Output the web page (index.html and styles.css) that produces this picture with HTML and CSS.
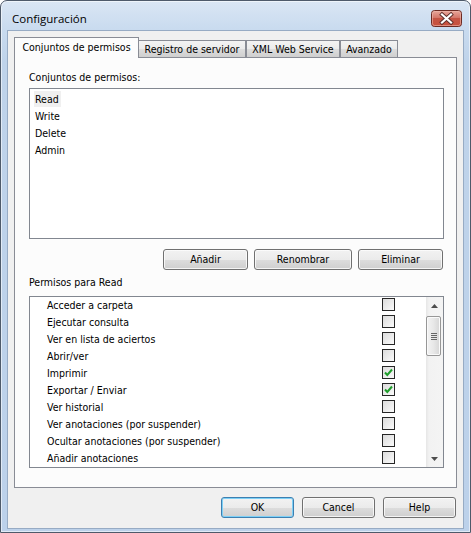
FILE: index.html
```html
<!DOCTYPE html>
<html lang="es">
<head>
<meta charset="utf-8">
<title>Configuración</title>
<link rel="stylesheet" href="styles.css">
</head>
<body>
<div class="window">
  <div class="titlebar">
    <span class="title">Configuración</span>
    <div class="close">
      <svg width="31" height="17" viewBox="0 0 31 17">
        <defs>
          <linearGradient id="cg" x1="0" y1="0" x2="0" y2="1">
            <stop offset="0" stop-color="#e9a99d"/>
            <stop offset="0.45" stop-color="#d4776a"/>
            <stop offset="0.5" stop-color="#c45444"/>
            <stop offset="1" stop-color="#c9513d"/>
          </linearGradient>
        </defs>
        <rect x="0.5" y="0.5" width="30" height="16" rx="3" ry="3" fill="url(#cg)" stroke="#6b2b24"/>
        <rect x="1.5" y="1.5" width="28" height="14" rx="2" ry="2" fill="none" stroke="#efb9ae" stroke-opacity="0.6"/>
        <path d="M11 4.5 L20 12.5 M20 4.5 L11 12.5" stroke="#5a2e2a" stroke-width="4" stroke-linecap="square"/>
        <path d="M11 4.5 L20 12.5 M20 4.5 L11 12.5" stroke="#ffffff" stroke-width="2.2" stroke-linecap="square"/>
      </svg>
    </div>
  </div>
  <div class="client">
    <div class="tabs">
      <div class="tab active">Conjuntos de permisos</div>
      <div class="tab t2">Registro de servidor</div>
      <div class="tab t3">XML Web Service</div>
      <div class="tab t4">Avanzado</div>
    </div>
    <div class="panel">
      <div class="label lbl1">Conjuntos de permisos:</div>
      <div class="listbox sets">
        <div class="item sel">Read</div>
        <div class="item">Write</div>
        <div class="item">Delete</div>
        <div class="item">Admin</div>
      </div>
      <div class="btnrow">
        <button class="btn b85">Añadir</button>
        <button class="btn b98">Renombrar</button>
        <button class="btn b85">Eliminar</button>
      </div>
      <div class="label lbl2">Permisos para Read</div>
      <div class="listbox perms">
        <div class="rows">
          <div class="prow"><span class="ptext">Acceder a carpeta</span><span class="cb"></span></div>
          <div class="prow"><span class="ptext">Ejecutar consulta</span><span class="cb"></span></div>
          <div class="prow"><span class="ptext">Ver en lista de aciertos</span><span class="cb"></span></div>
          <div class="prow"><span class="ptext">Abrir/ver</span><span class="cb"></span></div>
          <div class="prow"><span class="ptext">Imprimir</span><span class="cb checked"><svg width="11" height="11" viewBox="0 0 11 11"><path d="M2 5.5 L4.3 8 L9 2.5" fill="none" stroke="#1f9e2b" stroke-width="2"/></svg></span></div>
          <div class="prow"><span class="ptext">Exportar / Enviar</span><span class="cb checked"><svg width="11" height="11" viewBox="0 0 11 11"><path d="M2 5.5 L4.3 8 L9 2.5" fill="none" stroke="#1f9e2b" stroke-width="2"/></svg></span></div>
          <div class="prow"><span class="ptext">Ver historial</span><span class="cb"></span></div>
          <div class="prow"><span class="ptext">Ver anotaciones (por suspender)</span><span class="cb"></span></div>
          <div class="prow"><span class="ptext">Ocultar anotaciones (por suspender)</span><span class="cb"></span></div>
          <div class="prow"><span class="ptext">Añadir anotaciones</span><span class="cb"></span></div>
        </div>
        <div class="scrollbar">
          <div class="arrow up"><svg width="7" height="4" viewBox="0 0 7 4"><path d="M0 4 L3.5 0 L7 4 Z" fill="#4d4d4d"/></svg></div>
          <div class="track">
            <div class="thumb">
              <span class="grip"></span><span class="grip"></span><span class="grip"></span><span class="grip"></span>
            </div>
          </div>
          <div class="arrow down"><svg width="7" height="4" viewBox="0 0 7 4"><path d="M0 0 L7 0 L3.5 4 Z" fill="#4d4d4d"/></svg></div>
        </div>
      </div>
    </div>
    <div class="footer">
      <button class="btn b73 default">OK</button>
      <button class="btn b73">Cancel</button>
      <button class="btn b73">Help</button>
    </div>
  </div>
</div>
</body>
</html>
```
FILE: styles.css
```css
html, body {
  margin: 0;
  padding: 0;
  background: #ffffff;
}

body {
  width: 471px;
  height: 533px;
  overflow: hidden;
  font-family: "DejaVu Sans Condensed", "DejaVu Sans", sans-serif;
  font-stretch: condensed;
  font-size: 10.5px;
  color: #000;
}

.window {
  box-sizing: border-box;
  width: 471px;
  height: 533px;
  border: 1px solid #4e5a6a;
  border-radius: 7px 7px 0 0;
  background: linear-gradient(to bottom, #dae6f4 0px, #c9dbef 28px, #bfd3ea 60px, #bcd1ea 100%);
  display: flex;
  flex-direction: column;
  box-shadow: inset 0 0 0 1px rgba(255,255,255,0.55);
}

.titlebar {
  height: 29px;
  display: flex;
  align-items: flex-start;
  padding-left: 11px;
  flex-shrink: 0;
}

.title {
  font-family: "Open Sans", "Noto Sans", sans-serif;
  font-stretch: normal;
  font-size: 11.5px;
  line-height: 16px;
  margin-top: 10px;
  color: #000;
}

.close {
  margin-left: auto;
  margin-top: 9px;
  margin-right: 8px;
  width: 31px;
  height: 17px;
}

.close svg {
  display: block;
}

.client {
  flex: 1;
  margin: 0 6px 3px 6px;
  border: 1px solid #97abc4;
  background: #f0f0f0;
  padding: 6px 6px 0 6px;
  display: flex;
  flex-direction: column;
}

.tabs {
  height: 20px;
  display: flex;
  align-items: flex-end;
  flex-shrink: 0;
}

.tab {
  box-sizing: border-box;
  height: 17px;
  border: 1px solid #898c95;
  border-bottom: none;
  background: linear-gradient(to bottom, #f3f3f3 0%, #ebebeb 50%, #dddddd 51%, #cfcfcf 100%);
  display: flex;
  align-items: center;
  justify-content: center;
  white-space: nowrap;
  line-height: 14px;
}

.tab.active {
  width: 125px;
  height: 21px;
  margin-bottom: -1px;
  background: #fcfcfc;
  position: relative;
  z-index: 2;
  padding-bottom: 2px;
}

.tab.t2 {
  width: 108px;
  margin-left: -1px;
}

.tab.t3 {
  width: 94px;
}

.tab.t4 {
  width: 58px;
}

.panel {
  box-sizing: border-box;
  height: 431px;
  border: 1px solid #898c95;
  background: #fcfcfc;
  padding: 0 12px 0 14px;
  display: flex;
  flex-direction: column;
  flex-shrink: 0;
}

.label {
  line-height: 14px;
  height: 14px;
  white-space: nowrap;
}

.lbl1 {
  margin-top: 12px;
}

.lbl2 {
  margin-top: 5px;
}

.listbox {
  box-sizing: border-box;
  border: 1px solid #828790;
  background: #ffffff;
  flex-shrink: 0;
}

.sets {
  margin-top: 4px;
  height: 151px;
  padding: 2px 0 0 4px;
}

.item {
  width: max-content;
  height: 16px;
  line-height: 16px;
  margin-bottom: 1px;
  padding: 0 2px 0 1px;
}

.item.sel {
  background: #f0f0f0;
}

.btnrow {
  margin-top: 10px;
  display: flex;
  justify-content: flex-end;
  gap: 6px;
  padding-right: 1px;
}

.btn {
  box-sizing: border-box;
  height: 21px;
  border: 1px solid #707070;
  border-radius: 3px;
  background: linear-gradient(to bottom, #f2f2f2 0%, #ebebeb 50%, #dddddd 51%, #cfcfcf 100%);
  box-shadow: inset 0 0 0 1px rgba(252,252,252,0.8);
  font-family: inherit;
  font-stretch: condensed;
  font-size: 10.5px;
  color: #000;
  padding: 0;
  margin: 0;
  line-height: 19px;
}

.b85 { width: 85px; }
.b98 { width: 98px; }
.b73 { width: 73px; }

.btn.default {
  border-color: #3c7fb1;
  box-shadow: inset 0 0 0 1px #7dd0f6;
}

.perms {
  margin-top: 7px;
  height: 172px;
  display: flex;
  overflow: hidden;
}

.rows {
  flex: 1;
  display: flex;
  flex-direction: column;
  overflow: hidden;
}

.prow {
  height: 17px;
  flex-shrink: 0;
  display: flex;
  align-items: flex-start;
  padding-left: 17px;
  line-height: 17px;
}

.ptext {
  flex: 1;
  white-space: nowrap;
}

.cb {
  box-sizing: border-box;
  width: 13px;
  height: 13px;
  margin-top: 1px;
  margin-right: 31px;
  border: 1px solid #262626;
  background: linear-gradient(135deg, #dcdcdc 0%, #ececec 55%, #fbfbfb 100%);
  display: flex;
  align-items: center;
  justify-content: center;
}

.cb svg {
  display: block;
}

.scrollbar {
  width: 17px;
  flex-shrink: 0;
  display: flex;
  flex-direction: column;
  background: linear-gradient(to right, #e6e6e6 0px, #f2f2f2 3px, #f4f4f4 100%);
}

.arrow {
  height: 17px;
  display: flex;
  align-items: center;
  justify-content: center;
  flex-shrink: 0;
}

.track {
  flex: 1;
  padding-top: 2px;
}

.thumb {
  box-sizing: border-box;
  width: 15px;
  height: 40px;
  margin-left: 0;
  border: 1px solid #979797;
  border-radius: 2px;
  background: linear-gradient(to right, #f3f3f3 0%, #e8e8e8 50%, #d6d6d6 100%);
  box-shadow: inset 0 0 0 1px #fafafa;
  display: flex;
  flex-direction: column;
  align-items: center;
  justify-content: center;
  gap: 1px;
}

.grip {
  display: block;
  width: 6px;
  height: 1px;
  background: #666;
}

.footer {
  margin-top: 9px;
  display: flex;
  justify-content: flex-end;
  gap: 8px;
  padding-right: 1px;
}
```
